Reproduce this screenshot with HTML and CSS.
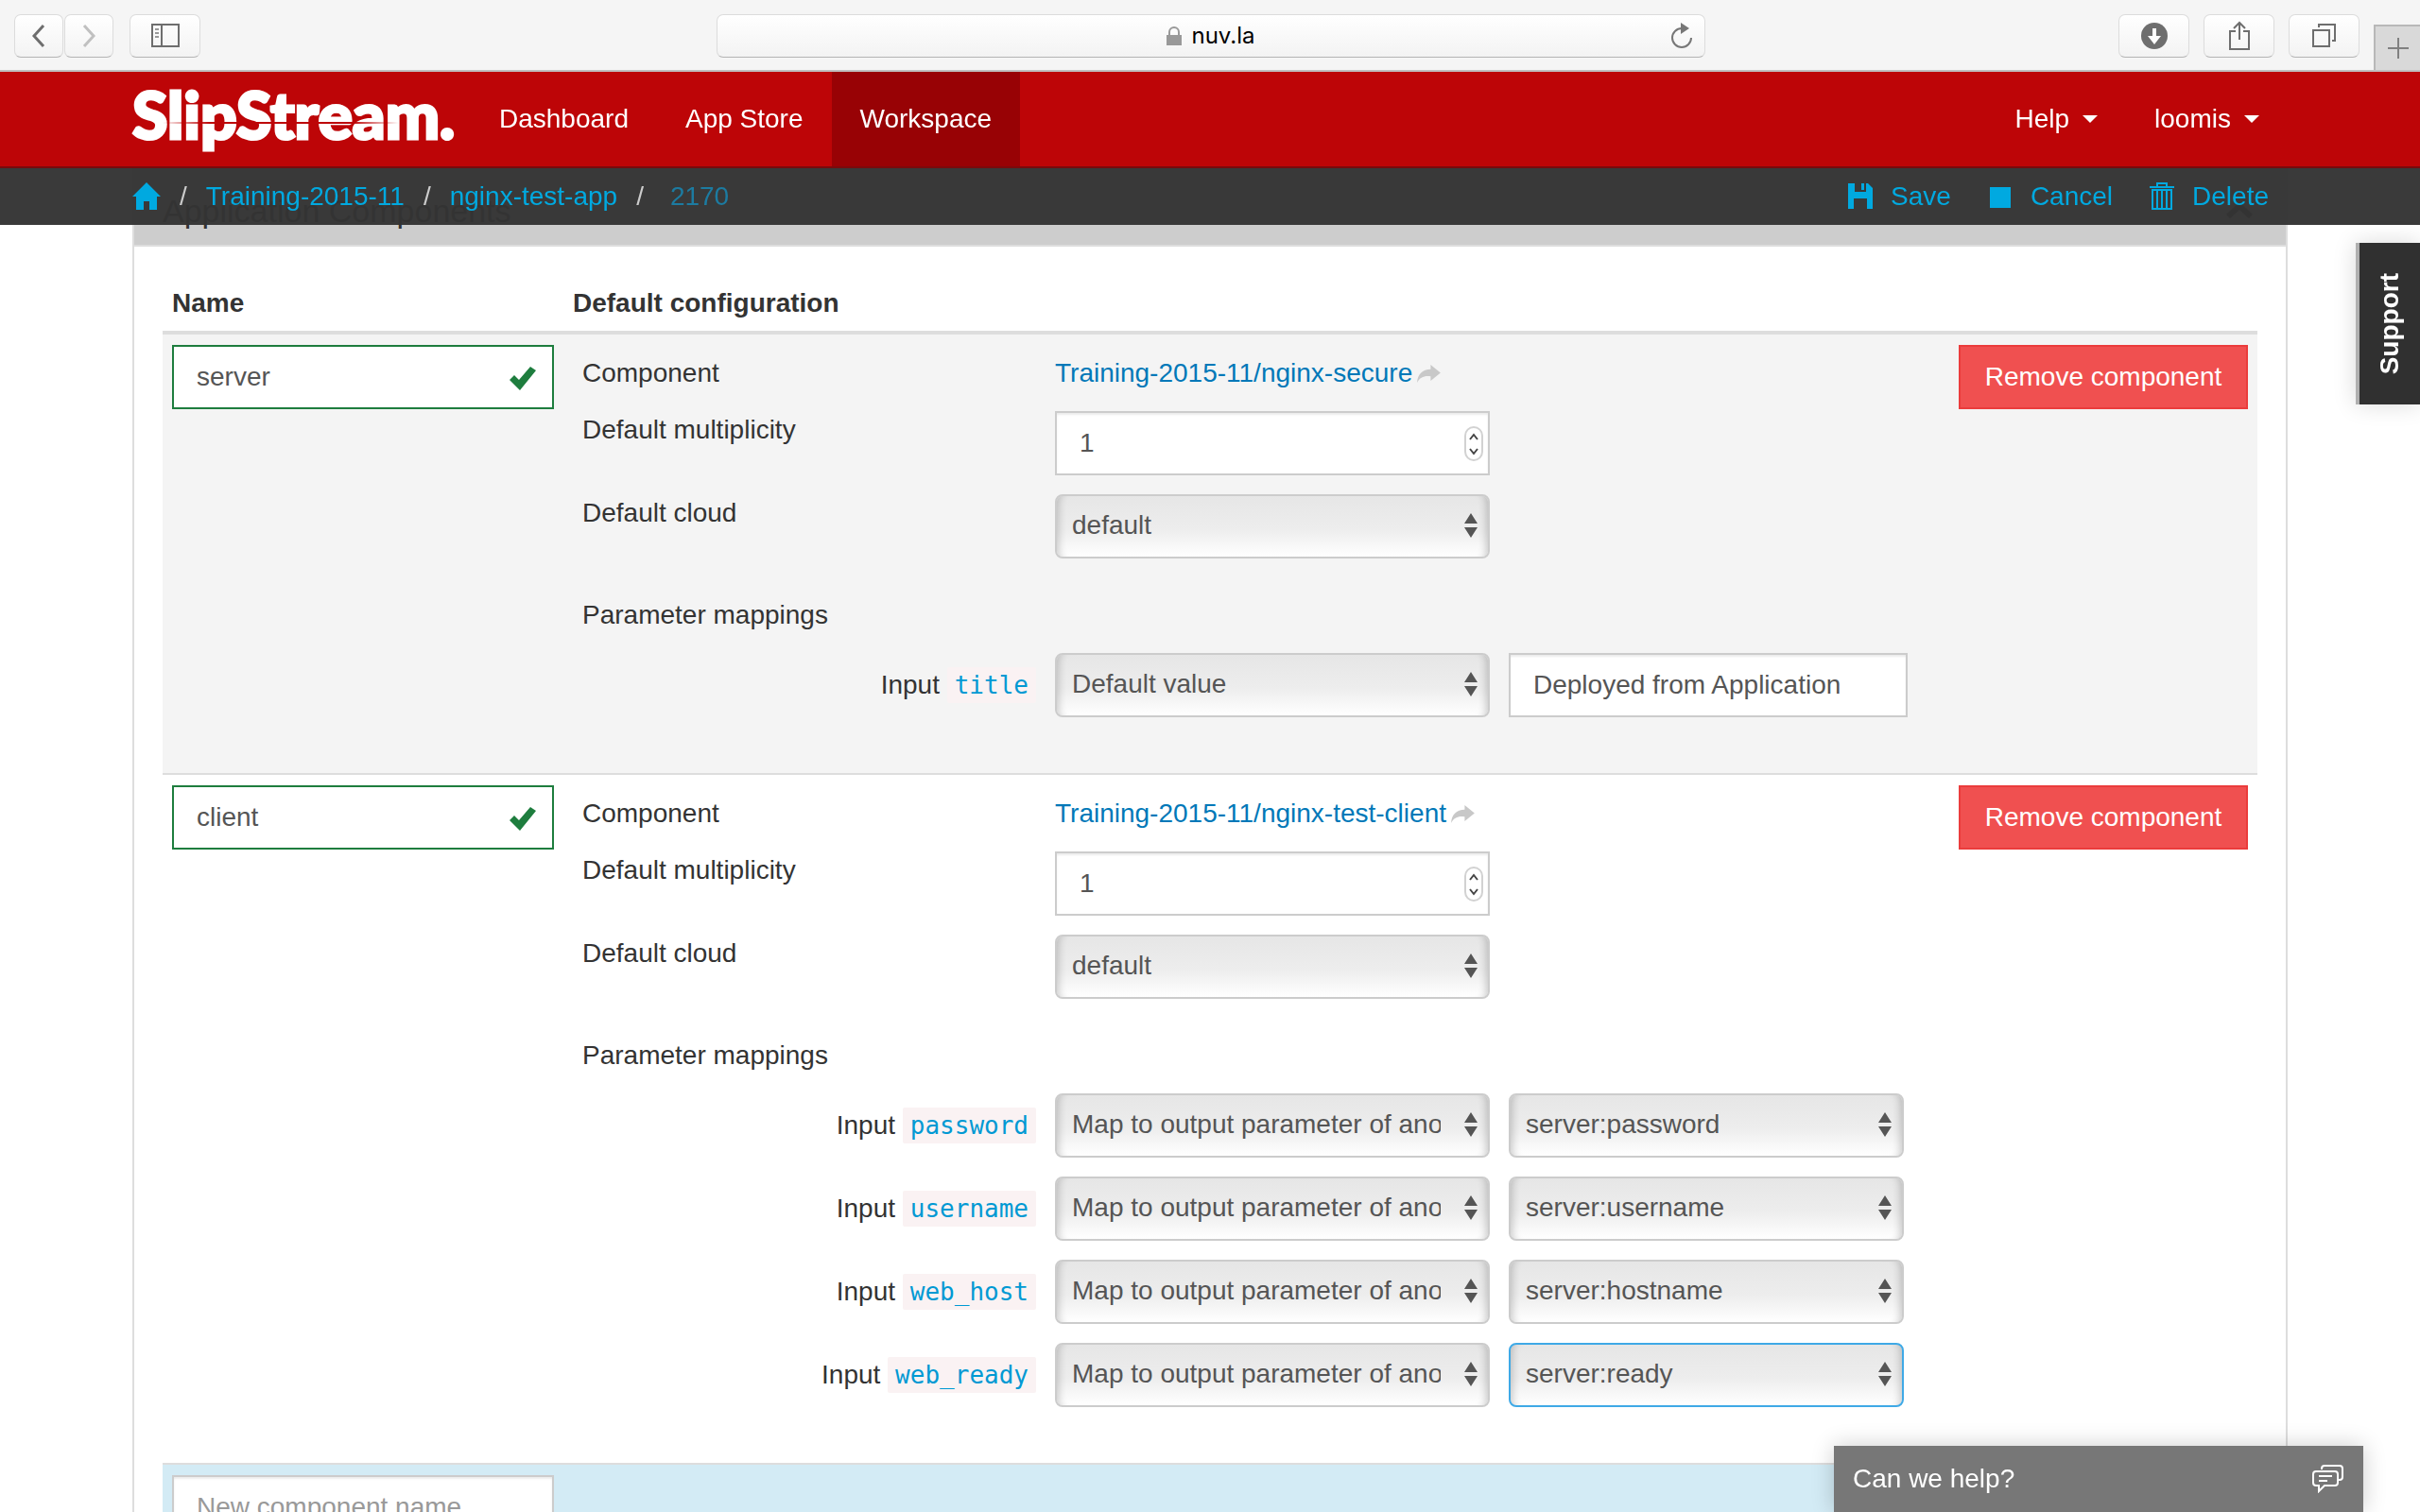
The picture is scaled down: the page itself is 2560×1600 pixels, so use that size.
FILE: index.html
```html
<!DOCTYPE html>
<html lang="en">
<head>
<meta charset="utf-8">
<title>nginx-test-app</title>
<link rel="stylesheet" href="styles.css">
</head>
<body>
<svg class="sprite" aria-hidden="true">
  <symbol id="updown" viewBox="0 0 14 26"><path d="M7 0l7 11H0zM7 26l7-11H0z"/></symbol>
  <symbol id="share" viewBox="0 0 26 20"><path d="M15 0l11 9-11 9v-5C8 12 3 14 0 20 0 11 6 5 15 5z"/></symbol>
  <symbol id="tick" viewBox="0 0 28 25"><path d="M0 14l5-5 5 5L22 0l6 4-17 21z"/></symbol>
  <symbol id="stepper" viewBox="0 0 20 38"><rect x="1" y="1" width="18" height="35" rx="9" fill="#fff" stroke="#d2d2d2" stroke-width="2"/><path d="M6 14l4-5 4 5M6 24l4 5 4-5" fill="none" stroke="#444" stroke-width="2"/></symbol>
</svg>

<header class="top">
  <div class="browser">
    <div class="browser-left">
      <div class="pair">
        <button class="tool tool-back" aria-label="Back"><svg width="14" height="26" viewBox="0 0 14 26"><path d="M12 2L2 13l10 11" fill="none" stroke="#6e6e6e" stroke-width="3"/></svg></button>
        <button class="tool tool-forward" aria-label="Forward"><svg width="14" height="26" viewBox="0 0 14 26"><path d="M2 2l10 11L2 24" fill="none" stroke="#c0c0c0" stroke-width="3"/></svg></button>
      </div>
      <button class="tool tool-wide" aria-label="Show sidebar"><svg width="30" height="26" viewBox="0 0 30 26"><path d="M1 1h28v23H1zM11 1v23" fill="none" stroke="#6e6e6e" stroke-width="2"/><path d="M4 6h4M4 10h4M4 14h4" stroke="#999" stroke-width="2"/></svg></button>
    </div>
    <div class="address">
      <span class="site"><svg width="16" height="20" viewBox="0 0 16 20"><path d="M0 9h16v11H0z" fill="#999"/><path d="M3 10V6a5 5 0 0 1 10 0v4" fill="none" stroke="#999" stroke-width="2"/></svg>nuv.la</span>
      <button class="reload" aria-label="Reload"><svg width="24" height="28" viewBox="0 0 24 28"><path d="M12 6a10 10 0 1 0 10 10" fill="none" stroke="#777" stroke-width="2"/><path d="M11 0l9 6-9 6z" fill="#777"/></svg></button>
    </div>
    <div class="browser-right">
      <button class="tool tool-wide" aria-label="Downloads"><svg width="28" height="28" viewBox="0 0 28 28"><circle cx="14" cy="14" r="14" fill="#6e6e6e"/><path d="M12 6h4v8h5l-7 9-7-9h5z" fill="#fff"/></svg></button>
      <button class="tool tool-wide" aria-label="Share"><svg width="24" height="32" viewBox="0 0 24 32"><path d="M8 11H2v19h20V11h-6M12 20V2M6 8l6-6 6 6" fill="none" stroke="#6e6e6e" stroke-width="2"/></svg></button>
      <button class="tool tool-wide" aria-label="Show tabs"><svg width="26" height="26" viewBox="0 0 26 26"><path d="M1 7h17v17H1zM7 4V1h17v17h-3" fill="none" stroke="#6e6e6e" stroke-width="2"/></svg></button>
      <button class="new-tab" aria-label="New tab"><svg width="22" height="22" viewBox="0 0 22 22"><path d="M0 11h22M11 0v22" stroke="#808080" stroke-width="2"/></svg></button>
    </div>
  </div>

  <nav class="nav">
    <a class="logo" href="#">SlipStream.</a>
    <a class="nav-item" href="#">Dashboard</a>
    <a class="nav-item" href="#">App Store</a>
    <a class="nav-item active" href="#">Workspace</a>
    <a class="nav-item push" href="#">Help<i class="caret"></i></a>
    <a class="nav-item" href="#">loomis<i class="caret"></i></a>
  </nav>

  <div class="subbar">
    <nav class="crumbs">
      <a href="#" aria-label="Home"><svg width="30" height="30" viewBox="0 0 30 30"><path d="M15 0L0 15h4v14h8v-9h6v9h8V15h4z" fill="currentColor"/></svg></a>
      <span>/</span><a href="#">Training-2015-11</a>
      <span>/</span><a href="#">nginx-test-app</a>
      <span>/</span><a class="current" href="#">2170</a>
    </nav>
    <div class="actions">
      <button class="action"><svg width="28" height="28" viewBox="0 0 28 28"><path d="M1 0h7v9h12V0h2l5 5v22h-6V16H7v11H1zM15 0h3v7h-3z" fill="currentColor"/></svg>Save</button>
      <button class="action"><svg width="28" height="28" viewBox="0 0 28 28"><path d="M3 4h22v22H3z" fill="currentColor"/></svg>Cancel</button>
      <button class="action"><svg width="28" height="32" viewBox="0 0 28 32"><path d="M1 6h26M9 6V2h10v4M4 9h20v20H4zM9 10v18M14 10v18M19 10v18" fill="none" stroke="currentColor" stroke-width="2"/></svg>Delete</button>
    </div>
  </div>
</header>

<main class="panel">
  <h2 class="panel-head">Application Components<svg width="30" height="16" viewBox="0 0 30 16"><path d="M3 14L15 3l12 11" fill="none" stroke="#333" stroke-width="6"/></svg></h2>
  <div class="panel-body">
    <table class="components">
      <thead>
        <tr><th class="col-name">Name</th><th>Default configuration</th><th class="col-action"></th></tr>
      </thead>
      <tbody>
        <tr class="odd">
          <td><div class="field"><input class="box valid" type="text" value="server" aria-label="Component name"><svg class="tick"><use href="#tick"/></svg></div></td>
          <td>
            <div class="config">
              <span>Component</span><span class="ref"><a href="#">Training-2015-11/nginx-secure</a><svg class="share"><use href="#share"/></svg></span>
              <label for="m1">Default multiplicity</label><div class="field"><input class="box" id="m1" type="number" value="1"><svg class="stepper"><use href="#stepper"/></svg></div>
              <label for="c1">Default cloud</label><div class="field"><select class="pick" id="c1"><option>default</option></select><svg class="updown"><use href="#updown"/></svg></div>
              <span class="mappings">Parameter mappings</span>
              <label class="input-label" for="t1">Input <code>title</code></label><div class="field"><select class="pick" id="t1"><option>Default value</option></select><svg class="updown"><use href="#updown"/></svg></div>
              <input class="box" type="text" value="Deployed from Application" aria-label="title value">
            </div>
          </td>
          <td><button class="remove">Remove component</button></td>
        </tr>
        <tr>
          <td><div class="field"><input class="box valid" type="text" value="client" aria-label="Component name"><svg class="tick"><use href="#tick"/></svg></div></td>
          <td>
            <div class="config">
              <span>Component</span><span class="ref"><a href="#">Training-2015-11/nginx-test-client</a><svg class="share"><use href="#share"/></svg></span>
              <label for="m2">Default multiplicity</label><div class="field"><input class="box" id="m2" type="number" value="1"><svg class="stepper"><use href="#stepper"/></svg></div>
              <label for="c2">Default cloud</label><div class="field"><select class="pick" id="c2"><option>default</option></select><svg class="updown"><use href="#updown"/></svg></div>
              <span class="mappings">Parameter mappings</span>
              <label class="input-label" for="p1">Input <code>password</code></label><div class="field"><select class="pick" id="p1"><option>Map to output parameter of another component</option></select><svg class="updown"><use href="#updown"/></svg></div>
              <div class="field source"><select class="pick" aria-label="password source"><option>server:password</option></select><svg class="updown"><use href="#updown"/></svg></div>
              <label class="input-label" for="p2">Input <code>username</code></label><div class="field"><select class="pick" id="p2"><option>Map to output parameter of another component</option></select><svg class="updown"><use href="#updown"/></svg></div>
              <div class="field source"><select class="pick" aria-label="username source"><option>server:username</option></select><svg class="updown"><use href="#updown"/></svg></div>
              <label class="input-label" for="p3">Input <code>web_host</code></label><div class="field"><select class="pick" id="p3"><option>Map to output parameter of another component</option></select><svg class="updown"><use href="#updown"/></svg></div>
              <div class="field source"><select class="pick" aria-label="web_host source"><option>server:hostname</option></select><svg class="updown"><use href="#updown"/></svg></div>
              <label class="input-label" for="p4">Input <code>web_ready</code></label><div class="field"><select class="pick" id="p4"><option>Map to output parameter of another component</option></select><svg class="updown"><use href="#updown"/></svg></div>
              <div class="field source"><select class="pick selected" aria-label="web_ready source"><option>server:ready</option></select><svg class="updown"><use href="#updown"/></svg></div>
            </div>
          </td>
          <td><button class="remove">Remove component</button></td>
        </tr>
        <tr class="new">
          <td><input class="box" type="text" placeholder="New component name" aria-label="New component name"></td>
          <td></td><td></td>
        </tr>
      </tbody>
    </table>
  </div>
</main>

<button class="support"><span>Support</span></button>
<button class="chat">Can we help?<svg width="34" height="30" viewBox="0 0 34 30"><g fill="none" stroke="#fff" stroke-width="2"><path d="M10 5V4a3 3 0 0 1 3-3h16a3 3 0 0 1 3 3v9a3 3 0 0 1-3 3h-1"/><path d="M4 7h20a3 3 0 0 1 3 3v9a3 3 0 0 1-3 3H13l-6 6v-6H4a3 3 0 0 1-3-3v-9a3 3 0 0 1 3-3zM7 12h14M7 17h9"/></g></svg></button>
</body>
</html>
```
FILE: styles.css
```css
* { box-sizing: border-box; }

html, body { height: 100%; }

body {
  margin: 0;
  overflow: hidden;
  background: #fff;
  color: #333;
  font: 28px/40px "Liberation Sans", Arial, sans-serif;
}

button, input, select { font: inherit; margin: 0; }
button { cursor: pointer; padding: 0; border: 0; background: none; color: inherit; }
a { text-decoration: none; color: #0078b8; }
svg { display: block; flex: none; }
.sprite { width: 0; height: 0; position: absolute; }

/* Header */
.top { position: sticky; top: 0; z-index: 2; }

.browser {
  display: flex;
  justify-content: space-between;
  height: 76px;
  padding: 15px 0 0 15px;
  background: #f5f5f5;
  border-bottom: 2px solid #c0c0c0;
}
.browser-left, .browser-right { display: flex; gap: 15px; }
.browser-left { gap: 17px; width: 306px; }
.pair { display: flex; gap: 1px; }
.browser-right { width: 319px; }

.tool {
  display: flex;
  align-items: center;
  justify-content: center;
  width: 52px;
  height: 46px;
  border: 1px solid #dcdcdc;
  border-bottom-color: #b4b4b4;
  border-radius: 7px;
  background: linear-gradient(#fff, #f3f3f3);
}
.tool-wide { width: 75px; }

.address {
  display: flex;
  align-items: center;
  flex: 0 1 1046px;
  height: 46px;
  padding-right: 12px;
  border: 1px solid #dcdcdc;
  border-bottom-color: #b4b4b4;
  border-radius: 7px;
  background: linear-gradient(#fff, #f3f3f3);
}
.site {
  display: flex;
  align-items: center;
  justify-content: center;
  gap: 10px;
  flex: 1;
  padding-left: 36px;
  color: #000;
  font: 24px/30px Inter, sans-serif;
}

.new-tab {
  display: flex;
  align-items: center;
  justify-content: center;
  flex: 1;
  height: 48px;
  margin-top: 11px;
  border: solid #b8b8b8;
  border-width: 2px 0 0 2px;
  background: #d9d9d9;
}

.nav {
  display: flex;
  height: 102px;
  padding: 0 140px;
  background: #bd0507;
  border-bottom: 2px solid #7a0a0c;
}
.logo {
  position: relative;
  width: 358px;
  color: #fff;
  font: 900 68px/90px Lato, sans-serif;
  -webkit-text-stroke: 3px #fff;
}
.logo::after {
  content: "";
  position: absolute;
  left: 32px;
  top: 53px;
  width: 250px;
  height: 2px;
  background: linear-gradient(90deg, transparent, #bd0507 20%, #bd0507 80%, transparent);
}
.nav-item {
  display: flex;
  align-items: center;
  padding: 0 30px;
  color: #fff;
}
.nav-item.active { background: #980205; }
.push { margin-left: auto; }
.caret {
  margin-left: 14px;
  border: 8px solid transparent;
  border-top-color: #fff;
  border-bottom: 0;
}

.subbar {
  display: flex;
  align-items: center;
  justify-content: space-between;
  height: 60px;
  padding: 0 160px 0 140px;
  background: rgba(52, 52, 52, 0.97);
}
.crumbs { display: flex; align-items: center; }
.crumbs a, .action { color: #00a9e0; }
.crumbs span { padding: 0 20px; color: #ccc; }
.crumbs .current { padding-left: 8px; color: #1c7ba1; }
.actions { display: flex; gap: 38px; }
.action { display: flex; align-items: center; gap: 18px; }

/* Panel */
.panel {
  margin: -60px 140px 0;
  border: 2px solid #ddd;
  border-top: 0;
}
.panel-head {
  display: flex;
  align-items: flex-end;
  justify-content: space-between;
  height: 83px;
  margin: 0;
  padding: 0 34px 16px 30px;
  border-bottom: 2px solid #ddd;
  background: #cdcdcd;
  font-size: 34px;
  font-weight: 400;
}
.panel-head svg { margin-bottom: 12px; }
.panel-body { padding: 30px; }

.components {
  width: 100%;
  table-layout: fixed;
  border-spacing: 0;
}
.col-name { width: 424px; }
.col-action { width: 326px; }
.components th {
  padding: 10px 10px 9px;
  border-bottom: 4px solid #ddd;
  text-align: left;
}
.components td {
  padding: 11px 10px 59px;
  border-bottom: 2px solid #ddd;
  vertical-align: top;
}
.odd { background: #f4f4f4; }
.new { background: #d3ebf5; }

.config {
  display: grid;
  grid-template-columns: 480px 460px 422px;
  gap: 20px;
  padding: 10px 10px 0;
}
.config > span:first-child, .config > label:not(.input-label) { grid-column: 1; }
.config .mappings { grid-column: 1 / -1; margin-top: 20px; }
.input-label { grid-column: 1; align-self: center; text-align: right; }
.ref { display: flex; align-items: center; gap: 5px; white-space: nowrap; }
code {
  padding: 4px 8px;
  border-radius: 2px;
  background: #faf2f3;
  color: #0099d3;
  font: 26px/40px "DejaVu Sans Mono", monospace;
}

.field { position: relative; }
.source { width: 418px; }

.box {
  display: block;
  width: 100%;
  height: 68px;
  padding: 0 24px;
  border: 2px solid #ccc;
  background: #fff;
  color: #555;
  box-shadow: inset 0 2px 2px rgba(0, 0, 0, 0.08);
  appearance: textfield;
}
.box::placeholder { color: #999; opacity: 1; }
.box::-webkit-inner-spin-button { display: none; }
.valid { border-color: #1e7d3e; box-shadow: none; }

.pick {
  display: block;
  width: 100%;
  height: 68px;
  padding: 0 50px 2px 16px;
  border: 2px solid #ccc;
  border-radius: 8px;
  background: linear-gradient(#e6e6e6, #ededed 55%, #fff);
  box-shadow: inset 10px 0 8px -8px rgba(0, 0, 0, 0.2), inset -10px 0 8px -8px rgba(0, 0, 0, 0.2);
  color: #555;
  appearance: none;
}
.selected { border-color: #3fa9e6; outline: 0; }

.tick, .stepper, .updown { position: absolute; pointer-events: none; }
.tick { right: 19px; top: 23px; width: 28px; height: 25px; fill: #1e7d3e; }
.stepper { right: 7px; top: 16px; width: 20px; height: 38px; }
.updown { right: 13px; top: 20px; width: 14px; height: 26px; fill: #555; }
.share { width: 25px; height: 19px; fill: #c8c8c8; }

.remove {
  width: 100%;
  height: 68px;
  border: 2px solid #eb3c3c;
  background: #f05050;
  color: #fff;
}

/* Floating widgets */
.support {
  position: fixed;
  right: 0;
  top: 257px;
  z-index: 3;
  display: flex;
  align-items: center;
  justify-content: center;
  width: 68px;
  height: 171px;
  border-left: 4px solid #b0b0b0;
  background: #303030;
  box-shadow: 0 0 24px rgba(0, 0, 0, 0.15);
  color: #fff;
  font-weight: 700;
}
.support span { writing-mode: vertical-rl; transform: rotate(180deg); }

.chat {
  position: fixed;
  right: 60px;
  bottom: 0;
  z-index: 3;
  display: flex;
  align-items: center;
  justify-content: space-between;
  width: 560px;
  height: 70px;
  padding: 0 20px;
  background: #777;
  box-shadow: 0 0 24px rgba(0, 0, 0, 0.2);
  color: #fff;
}
```
